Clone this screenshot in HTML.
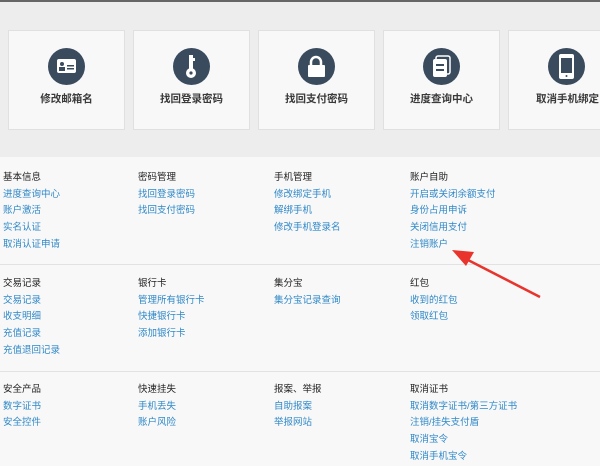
<!DOCTYPE html>
<html><head><meta charset="utf-8"><style>
*{margin:0;padding:0;box-sizing:border-box}
body{width:600px;height:453px;overflow:hidden;background:#f8f8f8;font-family:"Liberation Sans","Noto Sans CJK SC",sans-serif;position:relative}
.top{position:absolute;left:0;top:0;width:600px;height:157px;background:#ededee;border-top:2px solid #666}
.card{position:absolute;top:28px;width:117px;height:100px;background:#f8f8f8;border:1px solid #e0e0e0}
.circ{position:absolute;left:39px;top:17px;width:37px;height:37px;border-radius:50%;background:#3a4b5e}
.card .t{position:absolute;top:60px;left:0;width:100%;text-align:center;font-size:10.5px;font-weight:bold;color:#3a3a3a}
.col{position:absolute;font-size:9.5px;line-height:16.7px}
.col b{font-weight:normal;color:#222;display:block}
.col a{color:#2f88c8;display:block;text-decoration:none}
.hr{position:absolute;left:0;width:600px;height:1px;background:#e2e2e2}
</style></head><body>
<div class="top">
<div class="card" style="left:8px"><div class="circ"><svg width="37" height="37"><rect x="9" y="11" width="19" height="14" rx="2" fill="#fff"/><circle cx="14" cy="16" r="2" fill="#3a4b5e"/><rect x="11" y="19" width="6" height="4" fill="#3a4b5e"/><rect x="19" y="17" width="7" height="1.5" fill="#3a4b5e"/><rect x="19" y="20" width="7" height="1.5" fill="#3a4b5e"/></svg></div><div class="t">修改邮箱名</div></div>
<div class="card" style="left:133px"><div class="circ"><svg width="37" height="37"><rect x="16" y="7" width="4" height="15" fill="#fff"/><rect x="20" y="10" width="2" height="3" fill="#fff"/><circle cx="18" cy="25" r="5" fill="#fff"/><circle cx="18" cy="25" r="1.6" fill="#3a4b5e"/></svg></div><div class="t">找回登录密码</div></div>
<div class="card" style="left:258px"><div class="circ"><svg width="37" height="37"><path d="M13 17v-3a5 5 0 0 1 10 0v3" stroke="#fff" stroke-width="2.5" fill="none"/><rect x="10" y="17" width="17" height="12" rx="1" fill="#fff"/></svg></div><div class="t">找回支付密码</div></div>
<div class="card" style="left:383px"><div class="circ"><svg width="37" height="37"><rect x="13" y="8" width="14" height="18" rx="2" fill="none" stroke="#fff" stroke-width="1.5"/><rect x="10" y="11" width="14" height="18" rx="2" fill="#fff"/><rect x="13" y="16" width="8" height="2" fill="#3a4b5e"/><rect x="13" y="21" width="8" height="2" fill="#3a4b5e"/></svg></div><div class="t">进度查询中心</div></div>
<div class="card" style="left:508px;width:100px"><div class="circ"><svg width="37" height="37"><rect x="11" y="6" width="15" height="25" rx="2" fill="#fff"/><rect x="13" y="10" width="11" height="15" fill="#3a4b5e"/><circle cx="18.5" cy="28" r="1" fill="#3a4b5e"/></svg></div><div class="t" style="width:117px">取消手机绑定</div></div>
</div>
<div class="col" style="left:3px;top:170px"><b>基本信息</b><a>进度查询中心</a><a>账户激活</a><a>实名认证</a><a>取消认证申请</a></div>
<div class="col" style="left:138px;top:170px"><b>密码管理</b><a>找回登录密码</a><a>找回支付密码</a></div>
<div class="col" style="left:274px;top:170px"><b>手机管理</b><a>修改绑定手机</a><a>解绑手机</a><a>修改手机登录名</a></div>
<div class="col" style="left:410px;top:170px"><b>账户自助</b><a>开启或关闭余额支付</a><a>身份占用申诉</a><a>关闭信用支付</a><a>注销账户</a></div>
<div class="hr" style="top:264px"></div>
<div class="col" style="left:3px;top:276px"><b>交易记录</b><a>交易记录</a><a>收支明细</a><a>充值记录</a><a>充值退回记录</a></div>
<div class="col" style="left:138px;top:276px"><b>银行卡</b><a>管理所有银行卡</a><a>快捷银行卡</a><a>添加银行卡</a></div>
<div class="col" style="left:274px;top:276px"><b>集分宝</b><a>集分宝记录查询</a></div>
<div class="col" style="left:410px;top:276px"><b>红包</b><a>收到的红包</a><a>领取红包</a></div>
<div class="hr" style="top:371px"></div>
<div class="col" style="left:3px;top:382px"><b>安全产品</b><a>数字证书</a><a>安全控件</a></div>
<div class="col" style="left:138px;top:382px"><b>快速挂失</b><a>手机丢失</a><a>账户风险</a></div>
<div class="col" style="left:274px;top:382px"><b>报案、举报</b><a>自助报案</a><a>举报网站</a></div>
<div class="col" style="left:410px;top:382px"><b>取消证书</b><a>取消数字证书/第三方证书</a><a>注销/挂失支付盾</a><a>取消宝令</a><a>取消手机宝令</a></div>
<svg style="position:absolute;left:0;top:0" width="600" height="453"><path d="M540 297 L468 260" stroke="#e8342c" stroke-width="2.5"/><path d="M452 250 L474 252 L466 266 Z" fill="#e8342c"/></svg>
</body></html>
